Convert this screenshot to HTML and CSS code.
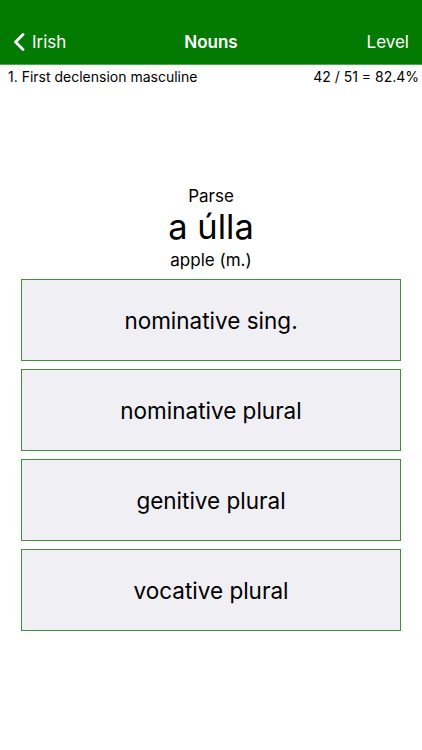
FILE: index.html
```html
<!DOCTYPE html>
<html>
<head>
<meta charset="utf-8">
<link rel="stylesheet" href="styles.css">
</head>
<body>
<div class="app">
  <header class="navbar">
    <div class="nav-row">
      <div class="nav-back">
        <svg class="chev" width="12" height="18" viewBox="0 0 12 18"><path d="M10 1.5 L2.5 9 L10 16.5" fill="none" stroke="#fff" stroke-width="2.8" stroke-linecap="round" stroke-linejoin="round"/></svg>
        <span>Irish</span>
      </div>
      <div class="nav-title">Nouns</div>
      <div class="nav-right">Level</div>
    </div>
  </header>
  <div class="subbar">
    <span>1. First declension masculine</span>
    <span>42 / 51 = 82.4%</span>
  </div>
  <main class="quiz">
    <div class="prompt">Parse</div>
    <div class="word">a úlla</div>
    <div class="gloss">apple (m.)</div>
    <div class="choices">
      <div class="choice">nominative sing.</div>
      <div class="choice">nominative plural</div>
      <div class="choice">genitive plural</div>
      <div class="choice">vocative plural</div>
    </div>
  </main>
</div>
</body>
</html>
```

FILE: styles.css
```css
html, body {
  margin: 0;
  padding: 0;
  background: #fff;
}
body {
  font-family: "Inter", "Roboto", "Liberation Sans", sans-serif;
  color: #000;
  width: 422px;
  height: 750px;
  overflow: hidden;
}
.navbar {
  background: #037b03;
  padding-top: 20px;
  height: 44px;
  border-bottom: 1px solid #4aa84a;
}
.nav-row {
  height: 44px;
  display: flex;
  align-items: center;
  justify-content: space-between;
  color: #fff;
  font-size: 17px;
  padding: 0 13px 0 13px;
  position: relative;
}
.nav-back {
  display: flex;
  align-items: center;
  gap: 7px;
}
.chev {
  display: block;
}
.nav-title {
  position: absolute;
  left: 0;
  right: 0;
  text-align: center;
  font-weight: 600;
  pointer-events: none;
}
.nav-right {
  font-weight: 400;
}
.subbar {
  display: flex;
  justify-content: space-between;
  align-items: center;
  padding: 2px 3px 0 8px;
  height: 19px;
  font-size: 14px;
  color: #000;
}
.quiz {
  display: flex;
  flex-direction: column;
  align-items: center;
  padding-top: 100px;
}
.prompt {
  font-size: 17px;
  line-height: 20px;
}
.word {
  font-size: 34.5px;
  line-height: 42px;
  margin-top: 0;
}
.gloss {
  font-size: 17px;
  line-height: 20px;
  margin-top: 2px;
}
.choices {
  align-self: stretch;
  display: flex;
  flex-direction: column;
  gap: 8px;
  padding: 0 21px;
  margin-top: 9px;
}
.choice {
  height: 80px;
  border: 1px solid #3f913f;
  background: #efeff4;
  display: flex;
  align-items: center;
  justify-content: center;
  font-size: 22.5px;
  color: #000;
}
```
